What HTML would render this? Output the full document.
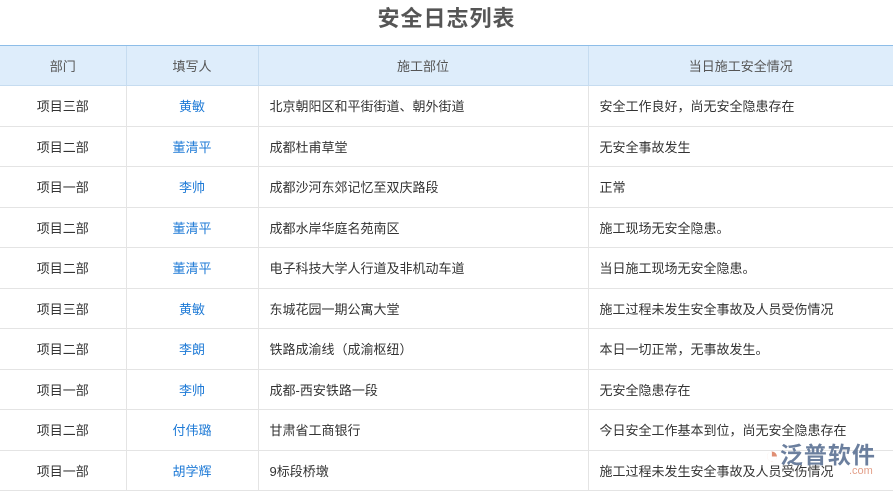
<!DOCTYPE html><html><head><meta charset="utf-8"><style>
body{margin:0;width:893px;height:484px;overflow:hidden;background:#fff;font-family:"Liberation Sans","Noto Sans CJK SC",sans-serif;}
h1{margin:0;height:45px;line-height:38px;text-align:center;font-size:22px;font-weight:bold;color:#555;letter-spacing:1px}
table{border-collapse:collapse;width:893px;table-layout:fixed;font-size:13px;color:#333}
tr{height:40.5px}
tr.h{height:40px}
th{background:#deedfb;color:#555;font-weight:normal;padding:0;border-top:1px solid #8dbde8;border-bottom:1px solid #c6dcf0;border-left:1px solid #c6dcf0}
td{padding:0;border-bottom:1px solid #e4e4e4;border-left:1px solid #e4e4e4}
th:first-child,td:first-child{border-left:none}
td.c{text-align:center}td.b{text-align:center;color:#1e7ad6}td.l{padding-left:11px}
.logo{position:absolute;left:765px;top:436px;font-size:23px;color:#6b7f9e;font-weight:bold;letter-spacing:1px}
.com{position:absolute;left:849px;top:465px;font-size:11px;color:#e3a08a}
</style></head><body>
<h1>安全日志列表</h1>
<table><colgroup><col style="width:126px"><col style="width:132px"><col style="width:330px"><col></colgroup>
<tr class="h"><th>部门</th><th>填写人</th><th>施工部位</th><th>当日施工安全情况</th></tr>
<tr><td class="c">项目三部</td><td class="b">黄敏</td><td class="l">北京朝阳区和平街街道、朝外街道</td><td class="l">安全工作良好，尚无安全隐患存在</td></tr>
<tr><td class="c">项目二部</td><td class="b">董清平</td><td class="l">成都杜甫草堂</td><td class="l">无安全事故发生</td></tr>
<tr><td class="c">项目一部</td><td class="b">李帅</td><td class="l">成都沙河东郊记忆至双庆路段</td><td class="l">正常</td></tr>
<tr><td class="c">项目二部</td><td class="b">董清平</td><td class="l">成都水岸华庭名苑南区</td><td class="l">施工现场无安全隐患。</td></tr>
<tr><td class="c">项目二部</td><td class="b">董清平</td><td class="l">电子科技大学人行道及非机动车道</td><td class="l">当日施工现场无安全隐患。</td></tr>
<tr><td class="c">项目三部</td><td class="b">黄敏</td><td class="l">东城花园一期公寓大堂</td><td class="l">施工过程未发生安全事故及人员受伤情况</td></tr>
<tr><td class="c">项目二部</td><td class="b">李朗</td><td class="l">铁路成渝线（成渝枢纽）</td><td class="l">本日一切正常，无事故发生。</td></tr>
<tr><td class="c">项目一部</td><td class="b">李帅</td><td class="l">成都-西安铁路一段</td><td class="l">无安全隐患存在</td></tr>
<tr><td class="c">项目二部</td><td class="b">付伟璐</td><td class="l">甘肃省工商银行</td><td class="l">今日安全工作基本到位，尚无安全隐患存在</td></tr>
<tr><td class="c">项目一部</td><td class="b">胡学辉</td><td class="l">9标段桥墩</td><td class="l">施工过程未发生安全事故及人员受伤情况</td></tr>
</table>
<div class="logo"><span style="color:#e08f74">◔</span>泛普软件</div><div class="com">.com</div>
</body></html>
